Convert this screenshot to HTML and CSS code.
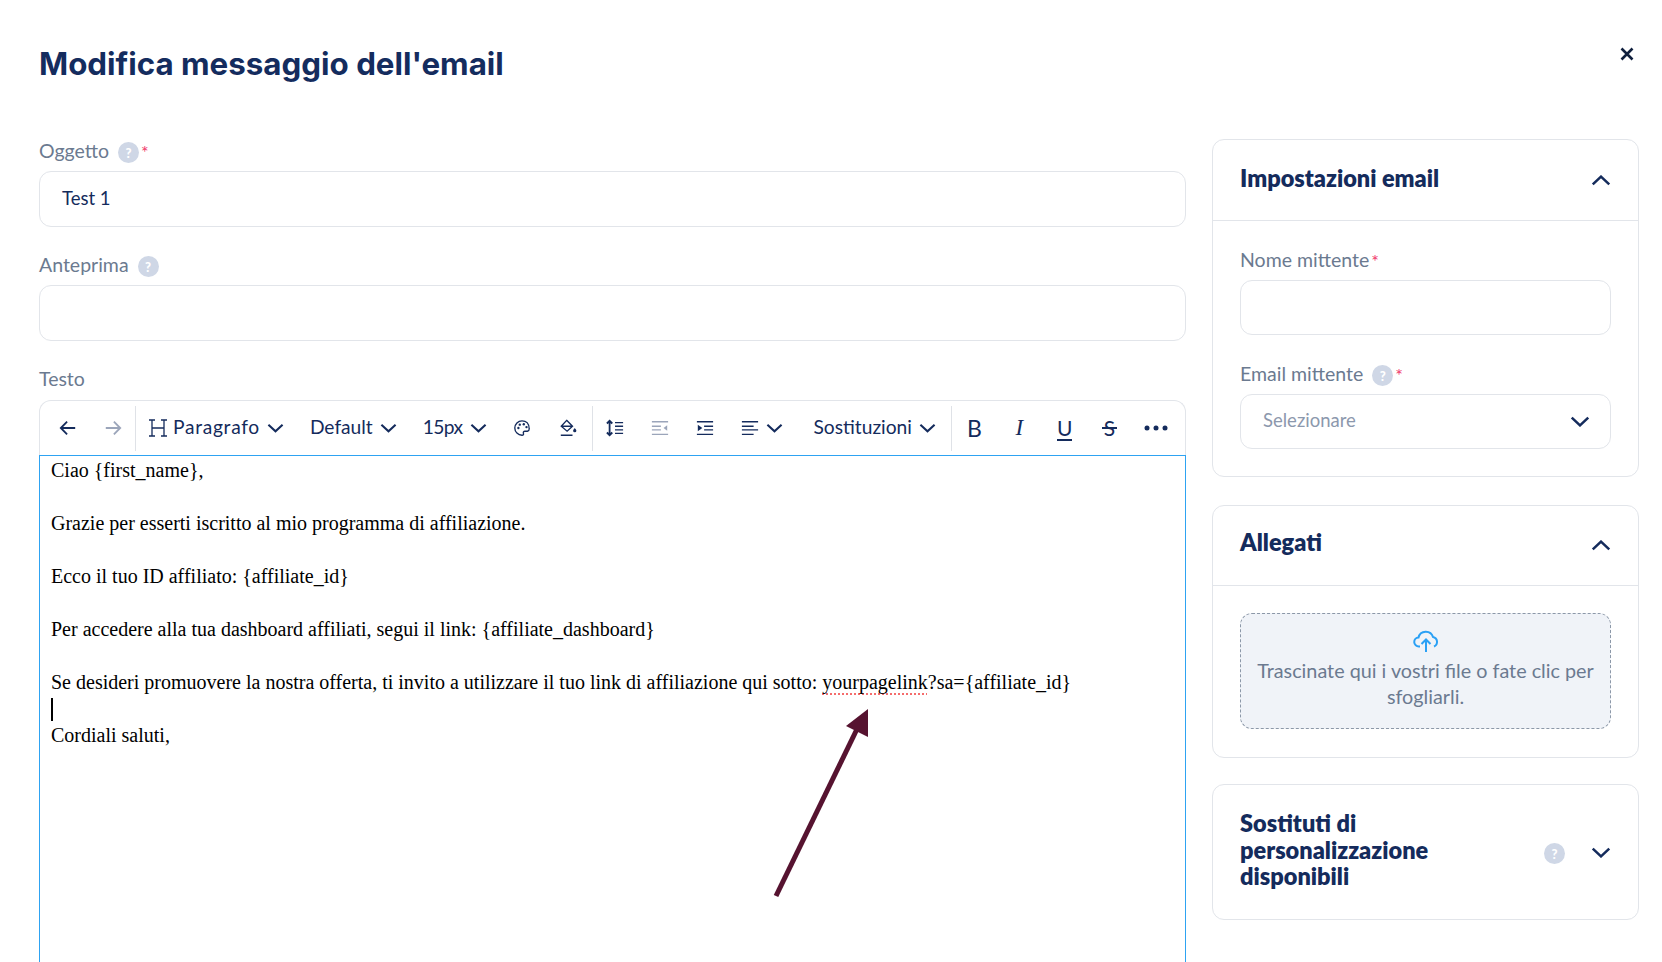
FILE: index.html
```html
<!DOCTYPE html>
<html lang="it">
<head>
<meta charset="utf-8">
<title>Modifica messaggio dell'email</title>
<link rel="stylesheet" href="styles.css">
</head>
<body>
<div class="page">
  <header class="top">
    <h1>Modifica messaggio dell'email</h1>
    <button class="close" aria-label="Chiudi"><svg viewBox="0 0 14 14" width="14" height="14"><path d="M1.500 1.500l11 11M12.500 1.500l-11 11"/></svg></button>
  </header>
  <div class="main">
    <section class="left">
      <div class="field">
        <div class="label">Oggetto <span class="help">?</span><span class="req">*</span></div>
        <div class="input">Test 1</div>
      </div>
      <div class="field">
        <div class="label">Anteprima <span class="help">?</span></div>
        <div class="input"></div>
      </div>
      <div class="field">
        <div class="label">Testo</div>
        <div class="toolbar">
          <div class="group g1">
            <span class="cell"><svg class="ic" viewBox="0 0 20 20"><path d="M18 10H2M9 3l-7 7 7 7"/></svg></span>
            <span class="cell off"><svg class="ic" viewBox="0 0 20 20"><path d="M2 10h16M11 3l7 7-7 7"/></svg></span>
          </div>
          <div class="group g2">
            <span class="dd"><svg class="ic h" viewBox="0 0 20 20"><path d="M4 2v16M16 2v16M4 10h12M1 2h6M13 2h6M1 18h6M13 18h6"/></svg><span class="wide">Paragrafo</span><svg class="chev" viewBox="0 0 18 10"><path d="M1.500 1.500L9 8.500l7.500-7"/></svg></span>
            <span class="dd">Default<svg class="chev" viewBox="0 0 18 10"><path d="M1.500 1.500L9 8.500l7.500-7"/></svg></span>
            <span class="dd"><span class="narrow">15px</span><svg class="chev" viewBox="0 0 18 10"><path d="M1.500 1.500L9 8.500l7.500-7"/></svg></span>
            <svg class="ic thin" viewBox="0 0 20 20"><path d="M10 2a8 8 0 0 0 0 16c1.600 0 2-1 1.600-2-.5-1.300.2-2.400 1.600-2.400H16a2.500 2.500 0 0 0 2-2.600C18 5 14.500 2 10 2z"/><circle class="dot" cx="6" cy="10" r="1.300"/><circle class="dot" cx="7.500" cy="6.300" r="1.300"/><circle class="dot" cx="12" cy="5.800" r="1.300"/><circle class="dot" cx="15" cy="9" r="1.300"/></svg>
            <svg class="ic thin fill" viewBox="0 0 20 20"><path d="M8.500 1.500l6.500 6.500-6 5.500-6.500-5.500 6-6.500zM3 8h12M2 18h13"/><path class="dot" d="M17.500 10c1.200 1.500 1.800 2.300 1.800 3a1.800 1.800 0 0 1-3.600 0c0-.7.600-1.500 1.800-3z"/></svg>
          </div>
          <div class="group g3">
            <svg class="ic thin" viewBox="0 0 20 20"><path class="bold" d="M4 2v16M1 5l3-3 3 3M1 15l3 3 3-3"/><path d="M10 4h9M10 8h9M10 12h9M10 16h9"/></svg>
            <svg class="ic thin off" viewBox="0 0 20 20"><path d="M1 3h18M1 8h10M1 12h10M1 17h18"/><path class="dot" d="M18 7v6l-4-3z"/></svg>
            <svg class="ic thin" viewBox="0 0 20 20"><path d="M1 3h18M9 8h10M9 12h10M1 17h18"/><path class="dot" d="M2 6.500v7l5-3.500z"/></svg>
            <span class="dd"><svg class="ic thin" viewBox="0 0 20 20"><path d="M1 3h18M1 8h13M1 12h18M1 17h13"/></svg><svg class="chev" viewBox="0 0 18 10"><path d="M1.500 1.500L9 8.500l7.500-7"/></svg></span>
            <span class="dd subs">Sostituzioni<svg class="chev" viewBox="0 0 18 10"><path d="M1.500 1.500L9 8.500l7.500-7"/></svg></span>
          </div>
          <div class="group g4">
            <span class="fmt">B</span>
            <span class="fmt it">I</span>
            <span class="fmt un">U</span>
            <span class="fmt st">S</span>
            <svg class="dots" viewBox="0 0 24 6"><circle cx="3" cy="3" r="2.500"/><circle cx="12" cy="3" r="2.500"/><circle cx="21" cy="3" r="2.500"/></svg>
          </div>
        </div>
        <div class="editor">
          <p>Ciao {first_name},</p>
          <p class="blank"></p>
          <p>Grazie per esserti iscritto al mio programma di affiliazione.</p>
          <p class="blank"></p>
          <p>Ecco il tuo ID affiliato: {affiliate_id}</p>
          <p class="blank"></p>
          <p>Per accedere alla tua dashboard affiliati, segui il link: {affiliate_dashboard}</p>
          <p class="blank"></p>
          <p>Se desideri promuovere la nostra offerta, ti invito a utilizzare il tuo link di affiliazione qui sotto: <span class="spell">yourpagelink</span>?sa={affiliate_id}</p>
          <p class="blank"><span class="caret"></span></p>
          <p>Cordiali saluti,</p>
        </div>
      </div>
    </section>
    <aside class="right">
      <div class="card">
        <div class="card-head">
          <h2>Impostazioni email</h2>
          <svg class="chev big" viewBox="0 0 18 10"><path d="M1.500 8.500L9 1.500l7.500 7"/></svg>
        </div>
        <div class="card-body">
          <div class="field tight">
            <div class="label">Nome mittente<span class="req">*</span></div>
            <div class="input"></div>
          </div>
          <div class="field tight">
            <div class="label">Email mittente <span class="help">?</span><span class="req">*</span></div>
            <div class="input select"><span>Selezionare</span><svg class="chev big" viewBox="0 0 18 10"><path d="M1.500 1.500L9 8.500l7.500-7"/></svg></div>
          </div>
        </div>
      </div>
      <div class="card">
        <div class="card-head short">
          <h2>Allegati</h2>
          <svg class="chev big" viewBox="0 0 18 10"><path d="M1.500 8.500L9 1.500l7.500 7"/></svg>
        </div>
        <div class="card-body">
          <div class="drop">
            <svg class="cloud" viewBox="0 0 26 24"><path d="M7 17.500H6a4.500 4.500 0 0 1-.5-9 7.500 7.500 0 0 1 14.500-.5 5 5 0 0 1 1 9.500M13 23V11M8.500 15L13 10.500l4.500 4.500"/></svg>
            <div>Trascinate qui i vostri file o fate clic per sfogliarli.</div>
          </div>
        </div>
      </div>
      <div class="card card-row">
        <h2>Sostituti di personalizzazione disponibili</h2>
        <span class="help">?</span>
        <svg class="chev big" viewBox="0 0 18 10"><path d="M1.500 1.500L9 8.500l7.500-7"/></svg>
      </div>
    </aside>
  </div>
</div>
<svg class="arrow" viewBox="0 0 1662 962" width="1662" height="962"><path class="shaft" d="M776 896L858 727"/><path class="head" d="M868 709L846 726L868 737z"/></svg>
</body>
</html>
```
FILE: styles.css
```css
* { box-sizing: border-box; }
html, body { margin: 0; height: 962px; overflow: hidden; background: #fff; }
body { position: relative; font-family: "Lato", "Liberation Sans", sans-serif; color: #142b5c; }
.page { height: 962px; padding: 0 23px 0 39px; overflow: hidden; }
.top { height: 139px; display: flex; justify-content: space-between; align-items: flex-start; }
h1 { margin: 42px 0 0; font: 700 31.300px/44px "Inter", sans-serif; color: #142c5e; }
.close { margin: 47px 5px 0 0; padding: 0; border: 0; background: none; line-height: 0; }
.close path { fill: none; stroke: #0f1f3d; stroke-width: 2.600; }
.main { display: flex; gap: 26px; align-items: flex-start; }
.left { width: 1147px; flex: none; }
.right { width: 427px; flex: none; }
.field { margin-bottom: 26px; }
.field.tight { margin-bottom: 27px; }
.field.tight:last-child { margin-bottom: 0; }
.label { display: flex; align-items: center; height: 24px; margin-bottom: 8px; padding-bottom: 2px; font-size: 19.500px; color: #6b7a90; white-space: pre; }
.help { display: inline-flex; align-items: center; justify-content: center; width: 21px; height: 21px; margin-top: 5px; margin-left: 4px; border-radius: 50%; background: #cfd7e6; color: #fff; font-size: 13px; font-weight: 900; }
.req { align-self: flex-start; margin-left: 2px; margin-top: 2px; color: #f0386b; font-size: 18px; }
.input { height: 56px; padding: 0 22px 3px; display: flex; align-items: center; border: 1px solid #e2e5ea; border-radius: 12px; font-size: 18.500px; background: #fff; }
.tight .input { height: 55px; }
.select { justify-content: space-between; color: #8c98ad; }
.toolbar { display: flex; align-items: center; height: 55px; margin-top: 9px; padding-left: 5px; border: 1px solid #e2e5ea; border-bottom: 0; border-radius: 12px 12px 0 0; font-size: 19.200px; }
.group { display: flex; align-items: center; height: 45px; border-right: 1px solid #dfe2e7; }
.g2 { padding: 0 15px 0 12px; gap: 26px; }
.g3 { padding: 0 15px 0 13px; gap: 27px; }
.g4 { padding: 0 0 0 15px; gap: 30px; border-right: 0; }
.cell { width: 45px; display: flex; justify-content: center; }
.dd { display: flex; align-items: center; gap: 7px; padding-bottom: 3px; white-space: nowrap; }
.dd svg { margin-top: 3px; }
.wide { letter-spacing: .7px; }
.narrow { letter-spacing: -.6px; }
.fill { margin-left: 2px; }
.subs { margin-left: 4px; }
svg { flex: none; }
.ic { width: 18px; height: 18px; fill: none; stroke: #142b5c; stroke-width: 2; }
.ic.thin { stroke-width: 1.500; }
.ic.h { width: 20px; height: 20px; stroke-width: 1.300; margin-right: -2px; }
.bold { stroke-width: 2; }
.dot { fill: #142b5c; stroke: none; }
.off { opacity: .42; }
.chev { width: 17px; height: 10px; fill: none; stroke: #142b5c; stroke-width: 2.200; }
.chev.big { width: 20px; height: 11px; stroke-width: 2.300; }
.dots { width: 24px; height: 6px; margin-left: -2.500px; fill: #142b5c; }
.fmt { width: 15px; text-align: center; font-size: 23px; line-height: 26px; color: #142b5c; }
.fmt.it { font-family: "Liberation Serif", serif; font-style: italic; }
.fmt.un { font-size: 21px; background: linear-gradient(#142b5c, #142b5c) bottom / 100% 2px no-repeat; }
.fmt.st { font-size: 21px; background: linear-gradient(#142b5c, #142b5c) center / 100% 2px no-repeat; }
.editor { height: 600px; padding: 1px 11px; border: 1px solid #2ea3f2; font: 20px/26.500px "Liberation Serif", serif; color: #000; }
.editor p { margin: 0; height: 26.500px; white-space: nowrap; }
.spell { text-decoration: underline dotted #f56c6c 2px; text-underline-offset: 4px; }
.caret { display: inline-block; width: 2px; height: 23px; margin-top: 2px; background: #000; vertical-align: top; }
.card { border: 1px solid #e2e5ea; border-radius: 12px; }
.card + .card { margin-top: 28px; }
.card-head { height: 81px; padding: 0 27px; display: flex; align-items: center; justify-content: space-between; border-bottom: 1px solid #e2e5ea; }
.card-head.short { height: 80px; }
.card-head h2 { margin-bottom: 3px; }
.card-head.short h2 { margin-bottom: 6px; }
h2 { margin: 0; font-size: 23.500px; font-weight: 800; line-height: 26.500px; color: #142b5c; }
.card-body { padding: 27px; }
.select .chev { margin: 3px -2px 0 0; }
.drop { height: 116px; margin-bottom: 1px; padding: 15px 10px 0; border: 1px dashed #8c98a8; border-radius: 12px; background: #f0f3f8; color: #6b7a90; font-size: 19.800px; line-height: 26px; text-align: center; }
.cloud { display: block; width: 26px; height: 24px; margin: 0 auto 4px; fill: none; stroke: #2aa0f5; stroke-width: 2; }
.card + .card-row { height: 136px; margin-top: 26px; padding: 0 27px; display: flex; align-items: center; }
.card-row h2 { width: 240px; margin-bottom: 4px; }
.card-row .help { margin: 3px 0 0 auto; }
.card-row .chev { margin-left: 26px; }
.arrow { position: absolute; left: 0; top: 0; pointer-events: none; }
.shaft { stroke: #561330; stroke-width: 5; fill: none; }
.head { fill: #561330; }
```
